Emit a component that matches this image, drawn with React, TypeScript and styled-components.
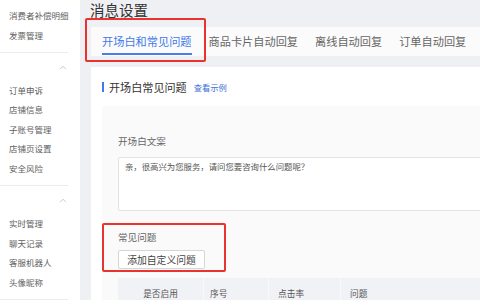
import React from "react";
import styled, { createGlobalStyle } from "styled-components";

const Global = createGlobalStyle`
  html, body { margin: 0; padding: 0; }
  body {
    font-family: "Noto Sans CJK SC", "Noto Sans", sans-serif;
    background: #eff0f3;
    overflow: hidden;
  }
  * { box-sizing: border-box; }
`;

const Page = styled.div`
  display: flex;
  width: 480px;
  height: 300px;
  overflow: hidden;
`;

const Sidebar = styled.nav`
  width: 80px;
  flex: none;
  background: #fff;
  display: flex;
  flex-direction: column;
  padding-top: 6px;
`;

const NavItem = styled.div`
  height: 19.5px;
  line-height: 19.5px;
  padding-left: 9px;
  font-size: 8.5px;
  color: #5e5e5e;
  white-space: nowrap;
`;

const Divider = styled.div`
  width: 68px;
  height: 1px;
  background: #ececec;
  margin: 7px 0 0;
`;

const GroupHead = styled.div`
  height: 32px;
  display: flex;
  align-items: flex-start;
  justify-content: flex-end;
  padding: 12px 13px 0 0;
  width: 80px;
`;

const Main = styled.main`
  flex: 1;
  position: relative;
  overflow: hidden;
  padding-left: 10px;
`;

const Inner = styled.div`
  width: 560px;
`;

const Title = styled.h1`
  margin: 0;
  height: 27px;
  line-height: 20px;
  font-size: 14.5px;
  font-weight: 400;
  color: #333;
`;

const TabBar = styled.div`
  margin-left: 1px;
  height: 29px;
  background: #fbfbfb;
  display: flex;
  gap: 17px;
  padding-left: 11px;
`;

const Tab = styled.div<{ $active?: boolean }>`
  position: relative;
  display: flex;
  align-items: center;
  font-size: 11.2px;
  color: ${(p) => (p.$active ? "#3f7ae8" : "#666")};
  white-space: nowrap;
  padding-bottom: 1px;
  &::after {
    content: "";
    display: ${(p) => (p.$active ? "block" : "none")};
    position: absolute;
    left: 0;
    right: 0;
    bottom: 1px;
    height: 2px;
    background: #4a7fe6;
  }
`;

const Card = styled.section`
  margin: 11px 0 0 1px;
  background: #fff;
  height: 240px;
  padding-left: 11px;
`;

const SectionHead = styled.div`
  height: 39px;
  display: flex;
  align-items: center;
  padding-top: 1px;
`;

const Bar = styled.span`
  width: 2px;
  height: 10px;
  background: #3f7ae8;
  margin-right: 5px;
`;

const SectionTitle = styled.span`
  font-size: 11.1px;
  color: #333;
`;

const Link = styled.span`
  font-size: 8.3px;
  color: #3f6fd6;
  margin-left: 7px;
`;

const Panel = styled.div`
  position: relative;
  background: #fafafa;
  height: 200px;
  padding: 29px 0 0 16px;
`;

const Label = styled.div`
  font-size: 9.6px;
  line-height: 12px;
  color: #666;
`;

const TextBox = styled.div`
  margin-top: 10px;
  height: 54px;
  background: #fff;
  border: 1px solid #e3e3e3;
  border-radius: 2px;
  padding: 2px 6px;
  font-size: 8.4px;
  line-height: 12px;
  color: #555;
`;

const Label2 = styled(Label)`
  margin-top: 20px;
`;

const Button = styled.button`
  margin-top: 7px;
  height: 19px;
  width: 87px;
  padding: 0;
  background: #fff;
  border: 1px solid #d6d6d6;
  border-radius: 2px;
  font-family: inherit;
  font-size: 9.8px;
  color: #444;
  display: flex;
  align-items: center;
  justify-content: center;
`;

const TableHead = styled.div`
  margin-top: 9px;
  height: 30px;
  display: flex;
  background: #f1f2f5;
`;

const Th = styled.div<{ $w: number; $center?: boolean; $pad?: number }>`
  width: ${(p) => p.$w}px;
  flex: none;
  display: flex;
  align-items: center;
  justify-content: ${(p) => (p.$center ? "center" : "flex-start")};
  padding-left: ${(p) => p.$pad ?? 0}px;
  font-size: 8.7px;
  color: #555;
  border-right: 1px solid #f9f9fa;
`;

const Highlight = styled.div<{ $l: number; $t: number; $w: number; $h: number }>`
  position: absolute;
  left: ${(p) => p.$l}px;
  top: ${(p) => p.$t}px;
  width: ${(p) => p.$w}px;
  height: ${(p) => p.$h}px;
  border: 2px solid #e8332f;
  border-radius: 2px;
  pointer-events: none;
`;

const Chevron = () => (
  <svg width="8" height="5" viewBox="0 0 8 5" fill="none">
    <path d="M1 4.2 L4 1.2 L7 4.2" stroke="#c4c4c4" strokeWidth="0.9" />
  </svg>
);

export default function App() {
  return (
    <>
      <Global />
      <Page>
        <Sidebar>
          <NavItem>消费者补偿明细</NavItem>
          <NavItem>发票管理</NavItem>
          <Divider />
          <GroupHead>
            <Chevron />
          </GroupHead>
          <NavItem>订单申诉</NavItem>
          <NavItem>店铺信息</NavItem>
          <NavItem>子账号管理</NavItem>
          <NavItem>店铺页设置</NavItem>
          <NavItem>安全风险</NavItem>
          <Divider />
          <GroupHead>
            <Chevron />
          </GroupHead>
          <NavItem>实时管理</NavItem>
          <NavItem>聊天记录</NavItem>
          <NavItem>客服机器人</NavItem>
          <NavItem>头像昵称</NavItem>
          <Divider />
        </Sidebar>
        <Main>
          <Inner>
            <Title>消息设置</Title>
            <TabBar>
              <Tab $active>开场白和常见问题</Tab>
              <Tab>商品卡片自动回复</Tab>
              <Tab>离线自动回复</Tab>
              <Tab>订单自动回复</Tab>
            </TabBar>
            <Card>
              <SectionHead>
                <Bar />
                <SectionTitle>开场白常见问题</SectionTitle>
                <Link>查看示例</Link>
              </SectionHead>
              <Panel>
                <Label>开场白文案</Label>
                <TextBox>亲，很高兴为您服务，请问您要咨询什么问题呢？</TextBox>
                <Label2>常见问题</Label2>
                <Button>添加自定义问题</Button>
                <TableHead>
                  <Th $w={86} $center>是否启用</Th>
                  <Th $w={65} $pad={6}>序号</Th>
                  <Th $w={72} $pad={9}>点击率</Th>
                  <Th $w={200} $pad={9}>问题</Th>
                </TableHead>
                <Highlight $l={0} $t={117} $w={124} $h={49} />
              </Panel>
            </Card>
          </Inner>
          <Highlight $l={5} $t={18} $w={121} $h={44} />
        </Main>
      </Page>
    </>
  );
}
